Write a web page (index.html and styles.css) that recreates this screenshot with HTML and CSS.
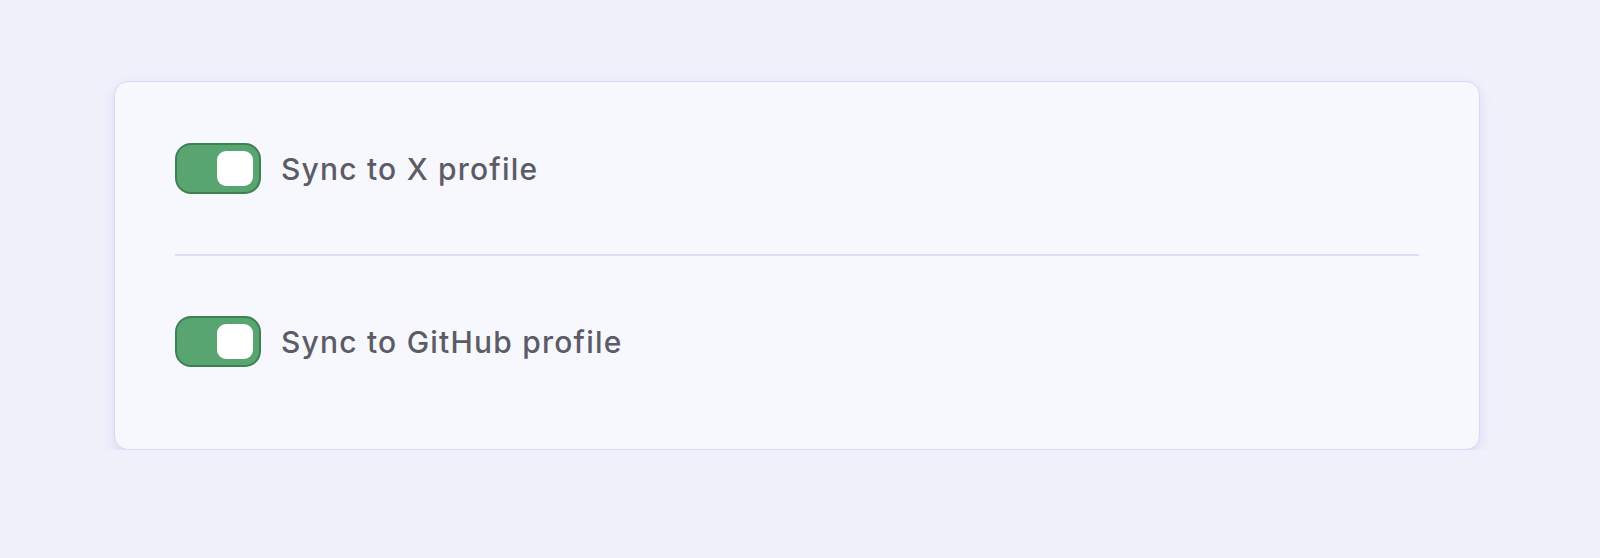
FILE: index.html
```html
<!DOCTYPE html>
<html lang="en">
<head>
  <meta charset="UTF-8">
  <meta name="viewport" content="width=device-width, initial-scale=1.0">
  <title>Profile Sync</title>
  <link rel="stylesheet" href="styles.css">
</head>
<body>
  <div class="card">
    <label class="row">
      <input type="checkbox" class="toggle-input" checked>
      <span class="toggle"><span class="knob"></span></span>
      <span class="label-text">Sync to X profile</span>
    </label>
    <div class="divider"></div>
    <label class="row">
      <input type="checkbox" class="toggle-input" checked>
      <span class="toggle"><span class="knob"></span></span>
      <span class="label-text">Sync to GitHub profile</span>
    </label>
  </div>
</body>
</html>
```

FILE: styles.css
```css
body {
  font-family: Inter, 'Open Sans', sans-serif;
  background: #f0f0fb;
  margin: 0;
  padding: 81px 120px 0 114px;
}
.card {
  background: #f7f8fe;
  border: 1px solid #d9d6f6;
  border-radius: 14px;
  box-shadow: 0 5px 12px rgba(110, 100, 200, 0.16);
  padding: 61px 60px 82px;
}
.row {
  display: flex;
  align-items: center;
  gap: 20px;
  cursor: pointer;
}
.toggle-input {
  display: none;
}
.toggle {
  width: 86px;
  height: 51px;
  box-sizing: border-box;
  background: #58a572;
  border: 2px solid #3e8151;
  border-radius: 16px;
  display: flex;
  align-items: center;
  justify-content: flex-end;
  padding-right: 6px;
}
.knob {
  width: 36px;
  height: 35px;
  background: #fff;
  border-radius: 9px;
}
.label-text {
  font-size: 30px;
  font-weight: 500;
  color: #5c5b66;
  letter-spacing: 1.2px;
}
.divider {
  height: 2px;
  background: #dedcf7;
  margin: 60px 0;
}
```
